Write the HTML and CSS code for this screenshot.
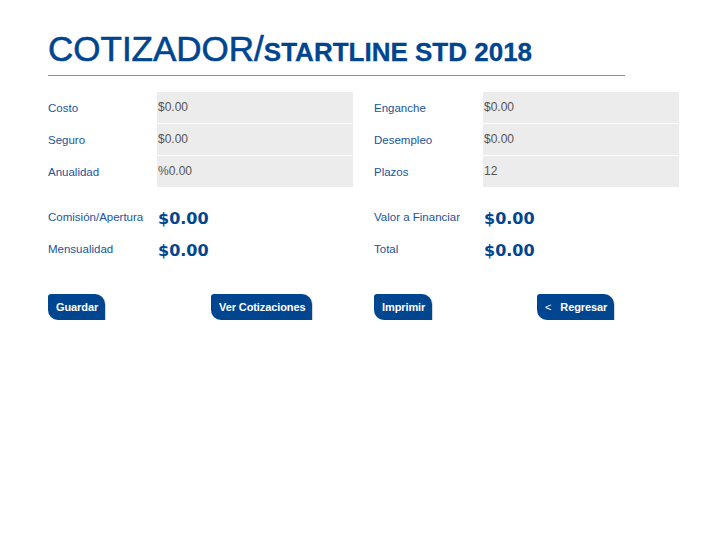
FILE: index.html
```html
<!DOCTYPE html>
<html lang="es">
<head>
<meta charset="utf-8">
<title>Cotizador</title>
<link rel="stylesheet" href="styles.css">
</head>
<body>
<main class="page">
  <h1 class="title">COTIZADOR/<span class="title-sub">STARTLINE STD 2018</span></h1>

  <section class="fields">
    <div class="col">
      <div class="field"><span class="label">Costo</span><span class="value">$0.00</span></div>
      <div class="field"><span class="label">Seguro</span><span class="value">$0.00</span></div>
      <div class="field"><span class="label">Anualidad</span><span class="value">%0.00</span></div>
    </div>
    <div class="col">
      <div class="field"><span class="label">Enganche</span><span class="value">$0.00</span></div>
      <div class="field"><span class="label">Desempleo</span><span class="value">$0.00</span></div>
      <div class="field"><span class="label">Plazos</span><span class="value">12</span></div>
    </div>
  </section>

  <section class="totals">
    <div class="col">
      <div class="total"><span class="label">Comisión/Apertura</span><span class="amount">$0.00</span></div>
      <div class="total"><span class="label">Mensualidad</span><span class="amount">$0.00</span></div>
    </div>
    <div class="col">
      <div class="total"><span class="label">Valor a Financiar</span><span class="amount">$0.00</span></div>
      <div class="total"><span class="label">Total</span><span class="amount">$0.00</span></div>
    </div>
  </section>

  <section class="actions">
    <div class="cell"><button class="btn">Guardar</button></div>
    <div class="cell"><button class="btn">Ver Cotizaciones</button></div>
    <div class="cell"><button class="btn">Imprimir</button></div>
    <div class="cell"><button class="btn"><span class="lt">&lt;</span>Regresar</button></div>
  </section>
</main>
</body>
</html>
```

FILE: styles.css
```css
html, body {
  margin: 0;
  padding: 0;
  background: #ffffff;
}

body {
  font-family: "Liberation Sans", Arial, sans-serif;
}

.page {
  padding: 29px 0 0 48px;
  width: 631px;
}

.title {
  margin: 0;
  width: 577px;
  padding-bottom: 3px;
  border-bottom: 1px solid #7095c6;
  font-size: 35px;
  line-height: 40px;
  font-weight: normal;
  color: #00458f;
  -webkit-text-stroke: 0.6px #00458f;
  white-space: nowrap;
}

.title-sub {
  font-size: 26px;
  font-weight: bold;
  -webkit-text-stroke: 0.3px #00458f;
}

.fields,
.totals {
  display: grid;
  grid-template-columns: 305px 305px;
  column-gap: 21px;
}

.fields {
  margin-top: 16px;
}

.fields .col {
  display: flex;
  flex-direction: column;
  gap: 1px;
}

.field {
  display: grid;
  grid-template-columns: 109px 196px;
  height: 31px;
  align-items: center;
}

.label {
  font-size: 11.5px;
  line-height: 16px;
  color: #21539c;
  white-space: nowrap;
}

.field .value {
  background: #ececec;
  height: 31px;
  line-height: 30px;
  padding-left: 1px;
  font-size: 12px;
  color: #555555;
}

.totals {
  margin-top: 22px;
}

.totals .col {
  display: flex;
  flex-direction: column;
  gap: 12px;
}

.total {
  display: grid;
  grid-template-columns: 110px 1fr;
  align-items: start;
  height: 20px;
}

.amount {
  font-family: "DejaVu Sans", Verdana, sans-serif;
  font-weight: bold;
  font-size: 16px;
  line-height: 20px;
  color: #00458f;
}

.actions {
  display: grid;
  grid-template-columns: repeat(4, 142px);
  column-gap: 21px;
  margin-top: 33px;
}

.btn {
  height: 26px;
  padding: 0 7px 0 8px;
  border: 0;
  border-radius: 3px 10px 0 10px;
  background: #00458f;
  color: #ffffff;
  font-family: "Liberation Sans", Arial, sans-serif;
  font-size: 11px;
  font-weight: bold;
  letter-spacing: -0.1px;
  line-height: 26px;
  box-shadow: 1px 1px 1px rgba(0, 0, 0, 0.18);
  cursor: pointer;
}

.lt {
  font-weight: normal;
  margin-right: 9px;
}
```
